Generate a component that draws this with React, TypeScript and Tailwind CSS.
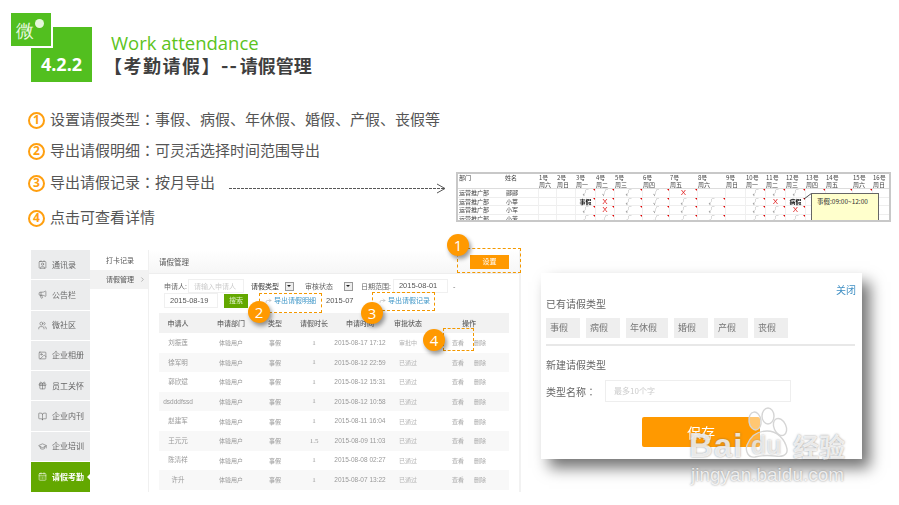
import React from "react";
import { BookOpen, CalendarDays, ChevronRight, Contact, Forward, GraduationCap, Gift, Image, Megaphone, Users } from "lucide-react";

const SANS = "font-['Noto_Sans_CJK_SC','Noto_Sans',sans-serif]";

const points = [
  { n: "1", a: "设置请假类型", b: "事假、病假、年休假、婚假、产假、丧假等", cls: "" },
  { n: "2", a: "导出请假明细", b: "可灵活选择时间范围导出", cls: "mt-[11px]" },
  { n: "3", a: "导出请假记录", b: "按月导出", cls: "mt-[12px]" },
  { n: "4", a: "点击可查看详情", b: "", cls: "mt-[15px]" },
];

const nav = [
  { t: "通讯录", I: Contact },
  { t: "公告栏", I: Megaphone },
  { t: "微社区", I: Users },
  { t: "企业相册", I: Image },
  { t: "员工关怀", I: Gift },
  { t: "企业内刊", I: BookOpen },
  { t: "企业培训", I: GraduationCap },
];

const rows = [
  ["刘振莲", "2015-08-17 17:12", "审批中", "1"],
  ["徐军明", "2015-08-12 22:59", "已通过", "1"],
  ["郭欣斌", "2015-08-12 15:31", "已通过", "1"],
  ["dsdddfssd", "2015-08-12 10:58", "已通过", "1"],
  ["赵建军", "2015-08-11 16:04", "已通过", "1"],
  ["王元元", "2015-08-09 11:03", "已通过", "1.5"],
  ["陈清祥", "2015-08-08 02:27", "已通过", "1"],
  ["许升", "2015-08-07 13:22", "已通过", "1"],
];

const COLS = "grid grid-cols-[38px_68px_20px_58px_34px_62px_60px_10px]";

function Colon() {
  return <span className="font-['Noto_Sans_CJK_TC',sans-serif]">{"\uFF1A"}</span>;
}

function Cell({ children, cls = "" }: { children?: React.ReactNode; cls?: string }) {
  return <div className={"flex items-center justify-center whitespace-nowrap " + cls}>{children}</div>;
}

const days = ["1号", "2号", "3号", "4号", "5号", "6号", "7号", "8号", "9号", "10号", "11号", "12号", "13号", "14号", "15号", "16号"];
const weeks = ["周六", "周日", "周一", "周二", "周三", "周四", "周五", "周六", "周日", "周一", "周二", "周三", "周四", "周五", "周六", "周日"];
const SHEET = "grid grid-cols-[47px_33px_18px_19px_20px_19px_28px_27px_28px_28px_20px_20px_20px_20px_20px_27px_20px_20px]";

const sheetRows: [string, string[]][] = [
  ["郦郦", ["", "", "v", "v", "v", "v", "x", "", "", "v", "v", "v", "m", "m", "m", ""]],
  ["小莘", ["", "", "事假", "x", "v", "v", "v", "v", "", "v", "x", "病假", "", "", "", ""]],
  ["小军", ["", "", "v", "x", "v", "v", "v", "v", "", "v", "v", "x", "", "", "", ""]],
  ["小芳", ["", "", "v", "v", "v", "v", "v", "v", "", "v", "v", "v", "", "", "", ""]],
];

function SheetCell({ v }: { v: string }) {
  return (
    <div className="relative flex items-center justify-center border-l border-[#f0f0f0] text-[6px] leading-none">
      {v === "v" && <span className="text-[#777]">√</span>}
      {v === "x" && <span className="text-[8px] font-medium text-[#e02020] font-['Liberation_Sans',sans-serif]">X</span>}
      {v !== "v" && v !== "x" && v !== "m" && v !== "" && <span className="font-bold text-[#111]">{v}</span>}
      {v !== "" && <span className="absolute right-0 top-0 border-l-[2px] border-t-[2px] border-l-transparent border-t-[#e00000]" />}
    </div>
  );
}

function Badge({ n, cls }: { n: string; cls: string }) {
  return (
    <div className={"absolute flex h-[22px] w-[22px] items-center justify-center rounded-full bg-[#ff9900] text-[15px] leading-none text-white shadow-[2px_3px_4px_rgba(0,0,0,0.4)] font-['Open_Sans',sans-serif] " + cls}>
      {n}
    </div>
  );
}

function Dashed({ cls }: { cls: string }) {
  return <div className={"absolute border border-dashed border-[#f39800] " + cls} />;
}

function SelectBox({ cls = "ml-[4px]" }: { cls?: string }) {
  return (
    <span className={"flex h-[9px] w-[9px] items-center justify-center border border-[#999] bg-[#eee] " + cls}>
      <span className="border-x-[2px] border-t-[2px] border-x-transparent border-t-[#222]" />
    </span>
  );
}

export default function App() {
  return (
    <div className={"relative h-[505px] w-[899px] overflow-hidden bg-white " + SANS}>
      {/* Title */}
      <div className="flex pl-[31px] pt-[27px]">
        <div className="relative flex h-[55px] w-[61px] items-end justify-center bg-[#52bf1f] pb-[5px] text-[18px] font-bold leading-[26px] text-white font-['Open_Sans',sans-serif]">
          4.2.2
          <div className="absolute left-[-20px] top-[-14px] flex h-[35px] w-[42px] items-center justify-center border-b-2 border-r-2 border-white bg-[#52bf1f] pr-[2px]">
            <span className="text-[18px] font-normal leading-none text-[#eaf8e0]">微</span>
            <span className="ml-[1px] mt-[-13px] h-[9px] w-[9px] rounded-full bg-[#e6f7dc]" />
          </div>
        </div>
        <div className="ml-[19px] flex flex-col">
          <div className="mt-[2px] whitespace-nowrap text-[18.5px] font-normal leading-[28px] text-[#5cc31c] font-['Open_Sans',sans-serif]">Work attendance</div>
          <div className="ml-[-7px] mt-[-5px] flex items-center whitespace-nowrap text-[18px] font-bold leading-[26px] text-[#3f3f3f]">
            <span className="tracking-[1.5px]">【考勤请假】</span>
            <span className="mr-[2px] text-[20px] tracking-[1px]">--</span>
            <span>请假管理</span>
          </div>
        </div>
      </div>

      {/* Points + sheet */}
      <div className="mt-[28px] flex pl-[28px]">
        <div className="w-[428px]">
          {points.map((p) => (
            <div key={p.n} className={"flex h-[20px] items-center " + p.cls}>
              <span className="flex h-[17px] w-[17px] shrink-0 items-center justify-center rounded-full border-2 border-[#ff9f0f] text-[12px] font-bold leading-none text-[#ff9f0f] font-['Open_Sans',sans-serif]">{p.n}</span>
              <span className="ml-[5px] mt-[-2px] whitespace-nowrap text-[15px] leading-[20px] text-[#555]">
                {p.a}
                {p.b && <Colon />}
                {p.b}
              </span>
              {p.n === "3" && (
                <svg className="ml-[14px] mt-[10px] shrink-0" width="217" height="11" viewBox="0 0 217 11" fill="none">
                  <path d="M0 5.5H215" stroke="#444" strokeWidth="0.9" strokeDasharray="3 1" />
                  <path d="M208 1L216 5.5L208 10" stroke="#444" strokeWidth="0.9" />
                </svg>
              )}
            </div>
          ))}
        </div>
        <div className="mt-[62px] h-[50px] w-[435px] overflow-hidden border-2 border-[#c8c8c8] bg-white">
          <div className="relative h-full blur-[0.4px] font-['Noto_Sans_CJK_SC',sans-serif]">
            <div className={SHEET + " h-[7px] items-center text-[6px] leading-none text-[#444]"}>
              <div className="pl-[1px]">部门</div>
              <div>姓名</div>
              {days.map((d, i) => (
                <div key={i} className="pl-[1px]">{d}</div>
              ))}
            </div>
            <div className={SHEET + " h-[8px] items-center border-b border-[#ddd] text-[6px] leading-none text-[#444]"}>
              <div />
              <div />
              {weeks.map((d, i) => (
                <div key={i} className="pl-[1px]">{d}</div>
              ))}
            </div>
            {sheetRows.map(([name, vals]) => (
              <div key={name} className={SHEET + " h-[8.5px] border-b border-[#eee] text-[6px] leading-[8px] text-[#444]"}>
                <div className="whitespace-nowrap pl-[1px]">运营推广部</div>
                <div className="pl-[1px]">{name}</div>
                {vals.map((v, i) => (
                  <SheetCell key={i} v={v} />
                ))}
              </div>
            ))}
            <svg className="absolute left-[345px] top-[19px]" width="9" height="7" viewBox="0 0 9 7" fill="none">
              <path d="M9 0L1 6" stroke="#222" strokeWidth="0.8" />
            </svg>
            <div className="absolute left-[353px] top-[19px] h-[34px] w-[68px] border border-[#666] bg-[#ffffcc] pl-[5px] pt-[3px] text-[6.5px] leading-[9px] text-[#333]">事假:09:00~12:00</div>
          </div>
        </div>
      </div>

      {/* Screens */}
      <div className="mt-[22px] flex items-start pl-[31px]">
        <div className="relative flex h-[242px] w-[490px]">
          <div className="flex h-full w-full blur-[0.45px]">
            <aside className="flex w-[59px] shrink-0 flex-col gap-px">
              {nav.map(({ t, I }) => (
                <div key={t} className="flex h-[29.3px] items-center bg-[#ebeced] pl-[7px] text-[8px] text-[#666]">
                  <I size={9} strokeWidth={1.5} className="shrink-0" />
                  <span className="ml-[5px] whitespace-nowrap">{t}</span>
                </div>
              ))}
              <div className="relative flex h-[30px] items-center bg-[#63a800] pl-[7px] text-[8px] font-bold text-white">
                <CalendarDays size={9} strokeWidth={1.5} className="shrink-0" />
                <span className="ml-[5px] whitespace-nowrap">请假考勤</span>
                <span className="absolute right-0 top-[12px] border-y-[3px] border-r-[3px] border-y-transparent border-r-white" />
              </div>
            </aside>

            <div className="w-[59px] shrink-0 border-r border-[#f0f0f0] text-[7px] text-[#555]">
              <div className="flex h-[20px] items-center pl-[16px]">打卡记录</div>
              <div className="flex h-[19px] items-center bg-[#f2f2f2] pl-[16px]">
                请假管理
                <ChevronRight size={7} className="ml-[5px] text-[#888]" />
              </div>
            </div>

            <div className="flex-1 border-r-2 border-[#f2f2f2]">
              <div className="flex h-[24px] items-center justify-between border-b border-[#eee] bg-gradient-to-b from-white to-[#f6f6f6] pl-[10px] pr-[10px]">
                <span className="text-[7.5px] text-[#555]">请假管理</span>
                <span className="flex h-[14px] w-[39px] items-center justify-center bg-[#ff9900] text-[7px] text-white">设置</span>
              </div>
              <div className="pl-[15px] pt-[5px]">
                <div className="flex h-[14px] items-center text-[7px] leading-none text-[#666]">
                  <span>申请人:</span>
                  <span className="ml-[1px] flex h-[14px] w-[56px] items-center border border-[#f0f0f0] pl-[5px] text-[#ccc]">请输入申请人</span>
                  <span className="ml-[7px] text-[#333]">请假类型</span>
                  <SelectBox cls="ml-[6px]" />
                  <span className="ml-[11px]">审核状态</span>
                  <SelectBox cls="ml-[11px]" />
                  <span className="ml-[8px]">日期范围:</span>
                  <span className="ml-[2px] flex h-[14px] w-[55px] items-center border border-[#f0f0f0] pl-[5px] text-[7.5px] text-[#555] font-['Liberation_Sans',sans-serif]">2015-08-01</span>
                  <span className="ml-[5px]">-</span>
                </div>
                <div className="flex h-[15px] items-center text-[7.5px] leading-none text-[#555]">
                  <span className="flex h-[15px] w-[54px] items-center border border-[#f0f0f0] pl-[5px] font-['Liberation_Sans',sans-serif]">2015-08-19</span>
                  <span className="ml-[6px] flex h-[14px] w-[24px] items-center justify-center bg-[#63a800] text-[7px] text-[#dff0c8]">搜索</span>
                  <span className="ml-[17px] flex items-center text-[7px] text-[#3f97c8]">
                    <Forward size={7} className="mr-[2px] text-[#aaa]" />
                    导出请假明细
                  </span>
                  <span className="ml-[10px] w-[53px] font-['Liberation_Sans',sans-serif]">2015-07</span>
                  <span className="flex items-center text-[7px] text-[#3f97c8]">
                    <Forward size={7} className="mr-[2px] text-[#aaa]" />
                    导出请假记录
                  </span>
                </div>
              </div>
              <div className="ml-[10px] mt-[5px] w-[350px] text-[6px] text-[#999]">
                <div className={COLS + " h-[20px] bg-[#f2f2f2] text-[7px] font-medium text-[#666]"}>
                  {["申请人", "申请部门", "类型", "请假时长", "申请时间", "审批状态", "操作"].map((h) => (
                    <Cell key={h}>{h}</Cell>
                  ))}
                  <div />
                </div>
                {rows.map(([name, time, st, len], i) => (
                  <div key={name} className={COLS + " h-[19.6px] " + (i % 2 ? "bg-[#f8f8f8]" : "bg-white")}>
                    <Cell cls="font-['Liberation_Sans','Noto_Sans_CJK_SC',sans-serif] text-[6.5px]">{name}</Cell>
                    <Cell>体验用户</Cell>
                    <Cell>事假</Cell>
                    <Cell cls="text-[7px] font-['Liberation_Serif',serif]">{len}</Cell>
                    <Cell cls="text-[6.5px] font-['Liberation_Sans',sans-serif]">{time}</Cell>
                    <Cell cls="text-[#b5b5b5]">{st}</Cell>
                    <Cell cls="gap-[10px] text-[#aaa]">
                      <span>查看</span>
                      <span>删除</span>
                    </Cell>
                    <div />
                  </div>
                ))}
              </div>
            </div>
          </div>

          <Dashed cls="left-[426px] top-[-2px] h-[25px] w-[64px]" />
          <Dashed cls="left-[228px] top-[43px] h-[20px] w-[63px]" />
          <Dashed cls="left-[341px] top-[42px] h-[19px] w-[63px]" />
          <Dashed cls="left-[412px] top-[78px] h-[23px] w-[31px]" />
          <Badge n="1" cls="left-[416px] top-[-16px]" />
          <Badge n="2" cls="left-[217px] top-[51px]" />
          <Badge n="3" cls="left-[330px] top-[52px]" />
          <Badge n="4" cls="left-[392px] top-[79px]" />
        </div>

        {/* Dialog */}
        <div className="relative ml-[20px] mt-[23px] h-[186px] w-[321px] bg-white text-[#666] shadow-[8px_9px_14px_rgba(0,0,0,0.55)] blur-[0.3px]">
          <div className="flex h-[24px] items-end justify-end pr-[6px] text-[10px] leading-[14px] text-[#3f8fc4]">关闭</div>
          <div className="pl-[5px]">
            <div className="text-[10px] leading-[14px]">已有请假类型</div>
            <div className="mt-[7px] flex gap-[6px]">
              {[["事假", 34], ["病假", 34], ["年休假", 42], ["婚假", 34], ["产假", 34], ["丧假", 34]].map(([t, w]) => (
                <span key={t as string} style={{ width: w as number }} className="flex h-[20px] items-center bg-[#eeeeee] pl-[4px] text-[9px] text-[#777]">{t}</span>
              ))}
            </div>
            <div className="mt-[6px] h-[2px] w-[309px] bg-[#e8e8e8]" />
            <div className="mt-[12px] text-[10px] leading-[14px]">新建请假类型</div>
            <div className="mt-[8px] flex items-center text-[10px]">
              <span className="w-[59px] whitespace-nowrap">类型名称<Colon /></span>
              <span className="flex h-[22px] w-[186px] items-center border border-[#eeeeee] pl-[8px] text-[8px] text-[#ccc]">最多10个字</span>
            </div>
            <div className="ml-[96px] mt-[15px] flex h-[30px] w-[118px] items-center justify-center rounded-[2px] bg-[#ff9900] text-[14px] text-white">保存</div>
          </div>
        </div>
      </div>

      {/* Baidu watermark */}
      <div className="absolute left-[689px] top-[431px] h-[56px] w-[165px] text-white/80 [text-shadow:0_0_2px_rgba(90,90,90,0.7)]">
        <svg width="52" height="52" viewBox="0 0 52 52" className="absolute left-[54px] top-[-24px]" fill="none" stroke="#d5d5d5" strokeWidth="1.4">
          <ellipse cx="12" cy="14" rx="6" ry="9" fill="#ffffff" fillOpacity="0.45" transform="rotate(-8 12 14)" />
          <ellipse cx="25" cy="9" rx="6" ry="8" fill="#ffffff" fillOpacity="0.45" />
          <ellipse cx="37" cy="20" rx="6" ry="9" fill="#ffffff" fillOpacity="0.45" transform="rotate(-25 37 20)" />
          <path d="M4 38C8 28 14 24 24 24C34 24 42 32 44 42C45 49 38 50 32 49C24 48 20 48 12 50C5 51 2 44 4 38Z" fill="#ffffff" fillOpacity="0.25" />
        </svg>
        <div className="flex h-[29px] items-center">
          <span className="w-[62px] text-[33px] font-bold leading-[29px] tracking-[1px] font-['Liberation_Sans',sans-serif]">Bai</span>
          <span className="w-[42px] text-[25px] font-bold leading-[29px] text-white/70 font-['Liberation_Sans',sans-serif]">du</span>
          <span className="text-[26px] font-bold leading-[29px]">经验</span>
        </div>
        <div className="ml-[2px] mt-[4px] whitespace-nowrap text-[19px] leading-[22px] font-['Liberation_Sans',sans-serif]">jingyan.baidu.com</div>
      </div>
    </div>
  );
}
